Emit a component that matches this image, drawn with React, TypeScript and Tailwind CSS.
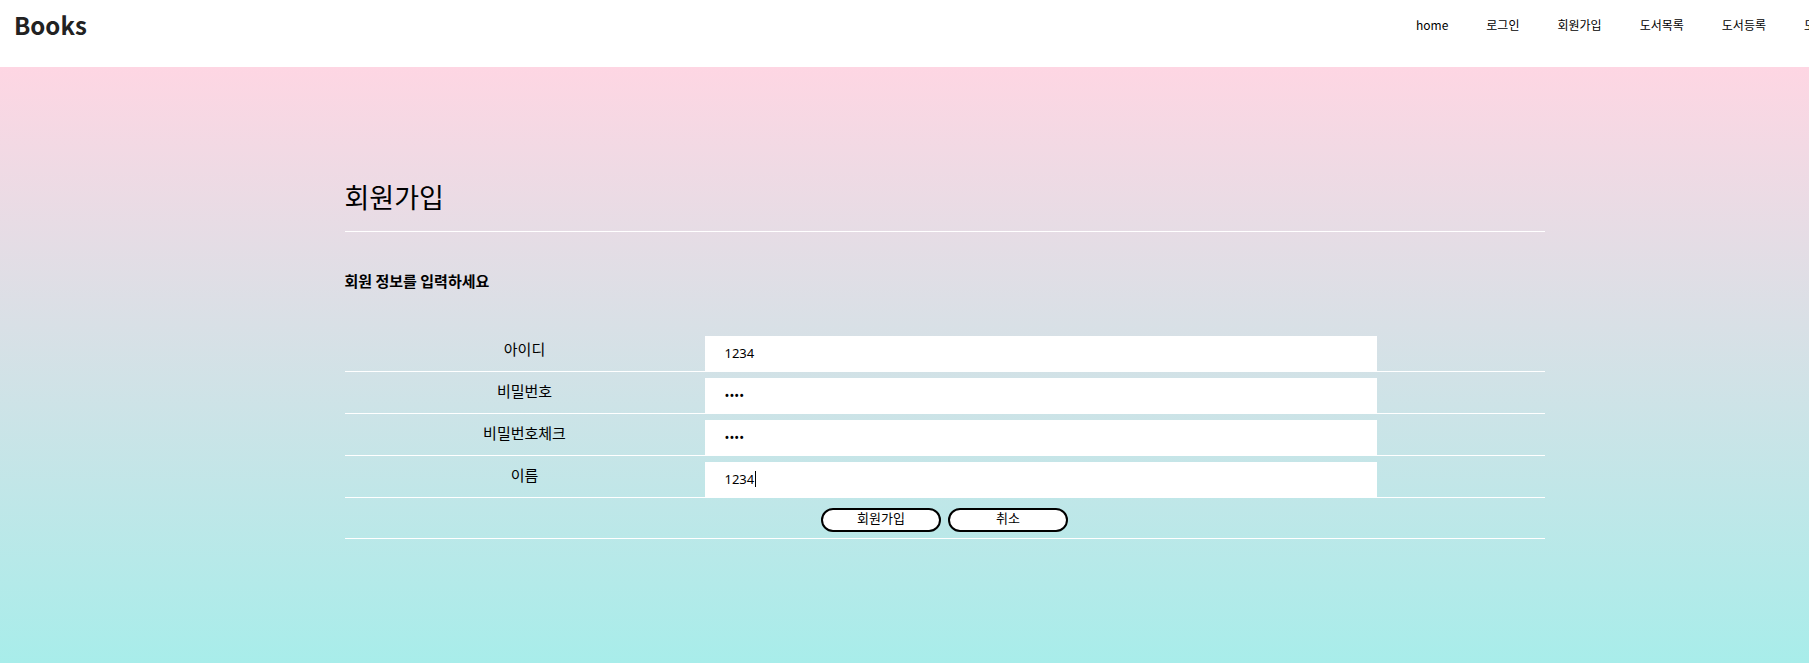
import React, { useEffect, useRef, useState } from 'react';

type Field = {
  id: string;
  label: string;
  type: 'text' | 'password';
};

const menus = ['home', '로그인', '회원가입', '도서목록', '도서등록', '도서'];

const fields: Field[] = [
  { id: 'userId', label: '아이디', type: 'text' },
  { id: 'password', label: '비밀번호', type: 'password' },
  { id: 'passwordCheck', label: '비밀번호체크', type: 'password' },
  { id: 'name', label: '이름', type: 'text' },
];

const Header: React.FC = () => (
  <header className="flex h-[67px] items-start justify-between overflow-hidden bg-white pt-[9px] pl-[14px]">
    <a href="#" className="text-2xl leading-8 font-bold text-[#222]">
      Books
    </a>
    {/* the menu is wider than its box and runs off the right edge */}
    <nav className="w-[393px] shrink-0">
      <ul className="flex gap-[38px] text-xs leading-8 whitespace-nowrap text-black">
        {menus.map((menu) => (
          <li key={menu}>
            <a href="#">{menu}</a>
          </li>
        ))}
      </ul>
    </nav>
  </header>
);

const JoinForm: React.FC = () => {
  const [values, setValues] = useState<Record<string, string>>({
    userId: '1234',
    password: '1234',
    passwordCheck: '1234',
    name: '1234',
  });
  // the drawn caret goes away as soon as the user types
  const [caret, setCaret] = useState(true);
  const nameRef = useRef<HTMLInputElement>(null);

  useEffect(() => {
    nameRef.current?.focus();
    nameRef.current?.setSelectionRange(4, 4);
  }, []);

  const handleChange = (id: string, value: string) => {
    setCaret(false);
    setValues({ ...values, [id]: value });
  };

  return (
    <form onSubmit={(e) => e.preventDefault()}>
      {fields.map((field) => (
        <div key={field.id} className="flex items-stretch border-b border-white pt-[6px]">
          <label
            htmlFor={field.id}
            className="flex w-[30%] items-start justify-center text-[15px] leading-[26px]"
          >
            {field.label}
          </label>
          <div className="relative w-[56%]">
            <input
              id={field.id}
              ref={field.id === 'name' ? nameRef : undefined}
              type={field.type}
              value={values[field.id]}
              onChange={(e) => handleChange(field.id, e.target.value)}
              className="block h-[35px] w-full bg-white px-5 pb-[2px] font-['Noto_Sans','Noto_Sans_CJK_KR',sans-serif] text-[13px] outline-none"
            />
            {field.id === 'name' && caret && (
              <span className="pointer-events-none absolute top-[9px] left-[50px] h-4 w-px bg-black" />
            )}
          </div>
        </div>
      ))}
      <div className="flex justify-center gap-[7px] border-b border-white pt-[10px] pb-[6px]">
        <button
          type="submit"
          className="h-6 w-[120px] rounded-full border-2 border-black bg-white pb-1 text-[13px] leading-4"
        >
          회원가입
        </button>
        <button
          type="reset"
          className="h-6 w-[120px] rounded-full border-2 border-black bg-white pb-1 text-[13px] leading-4"
        >
          취소
        </button>
      </div>
    </form>
  );
};

const App: React.FC = () => (
  <div className="flex min-h-screen flex-col bg-[#a8edea] font-['Noto_Sans_CJK_KR',sans-serif] text-black">
    <Header />
    <main className="grow bg-[linear-gradient(to_bottom,#fed6e3,#a8edea)]">
      <div className="mx-auto max-w-[1280px] pt-28 pl-20">
        <h1 className="border-b border-white pb-4 text-[27px] leading-9">회원가입</h1>
        <h2 className="pt-[38px] pb-[39px] text-[15px] leading-[21px] font-bold">
          회원 정보를 입력하세요
        </h2>
        <JoinForm />
      </div>
    </main>
  </div>
);

export default App;
